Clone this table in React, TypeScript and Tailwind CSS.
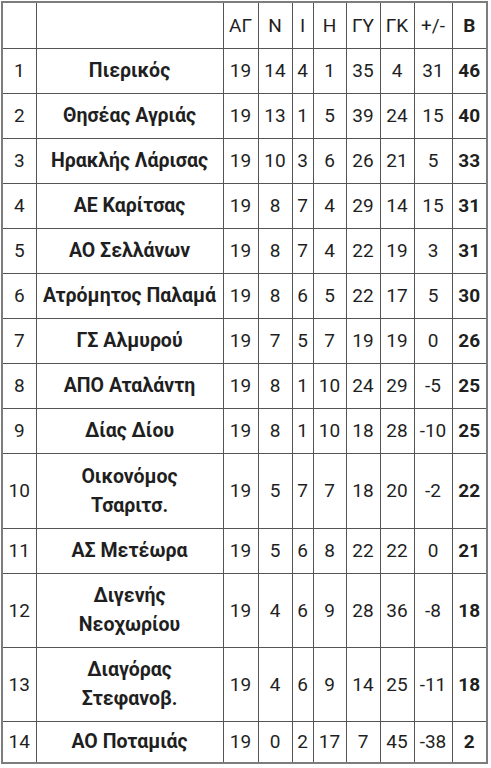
import React from "react";

type Row = { p: number; name: string[]; v: (string | number)[]; b: number; h: string };

const rows: Row[] = [
  { p: 1, name: ["Πιερικός"], v: [19, 14, 4, 1, 35, 4, 31], b: 46, h: "h-[45px]" },
  { p: 2, name: ["Θησέας Αγριάς"], v: [19, 13, 1, 5, 39, 24, 15], b: 40, h: "h-[45px]" },
  { p: 3, name: ["Ηρακλής Λάρισας"], v: [19, 10, 3, 6, 26, 21, 5], b: 33, h: "h-[45px]" },
  { p: 4, name: ["ΑΕ Καρίτσας"], v: [19, 8, 7, 4, 29, 14, 15], b: 31, h: "h-[45px]" },
  { p: 5, name: ["ΑΟ Σελλάνων"], v: [19, 8, 7, 4, 22, 19, 3], b: 31, h: "h-[45px]" },
  { p: 6, name: ["Ατρόμητος Παλαμά"], v: [19, 8, 6, 5, 22, 17, 5], b: 30, h: "h-[45px]" },
  { p: 7, name: ["ΓΣ Αλμυρού"], v: [19, 7, 5, 7, 19, 19, 0], b: 26, h: "h-[45px]" },
  { p: 8, name: ["ΑΠΟ Αταλάντη"], v: [19, 8, 1, 10, 24, 29, -5], b: 25, h: "h-[45px]" },
  { p: 9, name: ["Δίας Δίου"], v: [19, 8, 1, 10, 18, 28, -10], b: 25, h: "h-[45px]" },
  { p: 10, name: ["Οικονόμος", "Τσαριτσ."], v: [19, 5, 7, 7, 18, 20, -2], b: 22, h: "h-[75px]" },
  { p: 11, name: ["ΑΣ Μετέωρα"], v: [19, 5, 6, 8, 22, 22, 0], b: 21, h: "h-[45px]" },
  { p: 12, name: ["Διγενής", "Νεοχωρίου"], v: [19, 4, 6, 9, 28, 36, -8], b: 18, h: "h-[74px]" },
  { p: 13, name: ["Διαγόρας", "Στεφανοβ."], v: [19, 4, 6, 9, 14, 25, -11], b: 18, h: "h-[74px]" },
  { p: 14, name: ["ΑΟ Ποταμιάς"], v: [19, 0, 2, 17, 7, 45, -38], b: 2, h: "h-[42px]" },
];

const heads = ["ΑΓ", "Ν", "Ι", "Η", "ΓΥ", "ΓΚ", "+/-"];
const widths = [34, 187, 35, 34, 21, 33, 34, 34, 38, 35];

const cell = "border border-[#555] p-0 text-center align-middle";

export default function App() {
  return (
    <div
      className="w-[491px] h-[768px] bg-white overflow-hidden pt-[1px] pl-[1px]"
      style={{ fontFamily: "Roboto, 'Noto Sans', sans-serif" }}
    >
      <table className="table-fixed border-collapse border-2 border-[#7d7d7d] text-[19px] leading-[29px] text-[#1f1f1f]">
        <colgroup>
          {widths.map((w, i) => (
            <col key={i} style={{ width: w }} />
          ))}
        </colgroup>
        <tbody>
          <tr className="h-[46px]">
            <td className={cell}></td>
            <td className={cell}></td>
            {heads.map((h) => (
              <td key={h} className={cell}>
                {h}
              </td>
            ))}
            <td className={cell + " font-bold"}>Β</td>
          </tr>
          {rows.map((r) => (
            <tr key={r.p} className={r.h}>
              <td className={cell}>{r.p}</td>
              <td className={cell + " font-bold text-[19.5px]"}>
                {r.name.map((n, i) => (
                  <div key={i}>{n}</div>
                ))}
              </td>
              {r.v.map((x, i) => (
                <td key={i} className={cell}>
                  {x}
                </td>
              ))}
              <td className={cell + " font-bold"}>{r.b}</td>
            </tr>
          ))}
        </tbody>
      </table>
    </div>
  );
}
